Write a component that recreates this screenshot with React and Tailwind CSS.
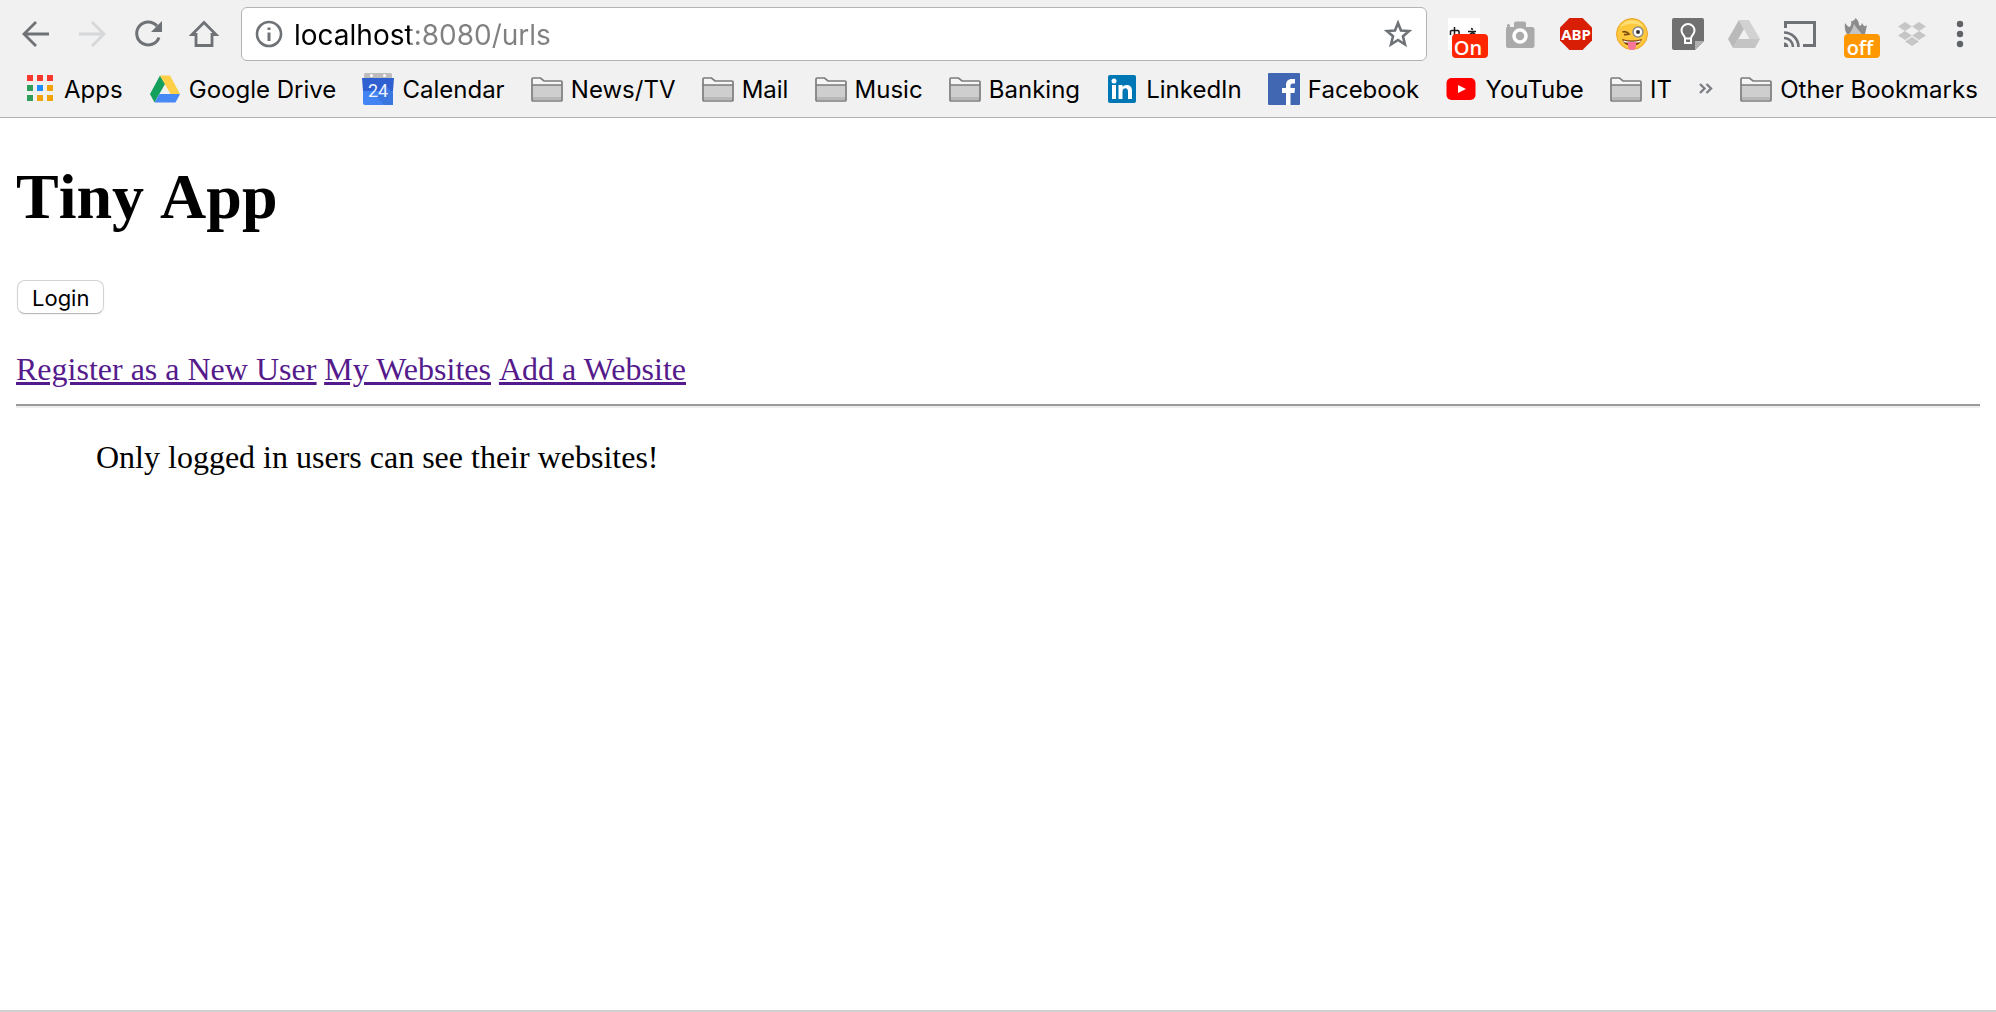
import React from "react";

const Icon = ({ children, className = "size-8 shrink-0", box = "0 0 32 32" }) => (
  <svg viewBox={box} className={className} fill="none" aria-hidden="true">
    {children}
  </svg>
);

const Folder = () => (
  <Icon>
    <path d="M1 26V6.500Q1 5 2.500 5H9.500Q11 5 12 6.500L13.500 8H29.500Q31 8 31 9.500V26Q31 27.500 29.500 27.500H2.500Q1 27.500 1 26Z" fill="#f6f6f6" />
    <rect x="1.500" y="12" width="29" height="15" fill="#cecece" />
    <rect x="1.500" y="24" width="29" height="3" fill="#b8b8b8" />
    <path d="M1 26V6Q1 5 2 5H9.500L13 8H30Q31 8 31 9V27Q31 28 30 28H2Q1 28 1 27ZM1 12H31" stroke="#7c7c7c" strokeWidth="1.700" />
  </Icon>
);

const Apps = () => (
  <Icon>
    {[
      ["#f9392f", "#f9392f", "#f9392f"],
      ["#2f9e58", "#1f8efa", "#f2a30a"],
      ["#2f9e58", "#f2a30a", "#f2a30a"],
    ].map((row, y) =>
      row.map((c, x) => <rect key={`${x}${y}`} x={3 + x * 10} y={2 + y * 10} width="6" height="6" fill={c} />)
    )}
  </Icon>
);

const Drive = () => (
  <Icon>
    <path d="M11 2.500L1 21L5.500 29.500L16 11Z" fill="#12a05c" />
    <path d="M11 2.500H21L31 21H21.500Z" fill="#ffcf48" />
    <path d="M10.500 21H31L26.500 29.500H5.500Z" fill="#4688f4" />
  </Icon>
);

const Calendar = () => (
  <Icon>
    <path d="M3 0H29Q30 0 30 2V6H2V2Q2 0 3 0Z" fill="#bdbdbd" />
    <circle cx="9.500" cy="2.500" r="1.500" fill="#fff" />
    <circle cx="22.500" cy="2.500" r="1.500" fill="#fff" />
    <path d="M0 5H32L31 18H1Z" fill="#2f5fd0" />
    <path d="M1 18H31V30Q31 32 29 32H3Q1 32 1 30Z" fill="#4284f3" />
    <path d="M15 24L24 13L31 20V32H22Z" fill="#3a76e0" />
    <text x="16" y="24" textAnchor="middle" fontFamily="Roboto, sans-serif" fontSize="18" fill="#eef3fd">24</text>
  </Icon>
);

const LinkedIn = () => (
  <Icon>
    <rect x="2" y="2" width="28" height="28" rx="2" fill="#0077b5" />
    <circle cx="8" cy="8" r="2.500" fill="#fff" />
    <path d="M6 12H10V26H6ZM12.500 12H16.500V14C18 11 26 10.500 26 17.500V26H22V18.500C22 14 16.500 14.500 16.500 18.500V26H12.500Z" fill="#fff" />
  </Icon>
);

const Facebook = () => (
  <Icon>
    <rect width="32" height="32" rx="1" fill="#4267b2" />
    <path d="M18 32V20H14V15H18V12C18 8 20.500 6 24 6H27V10.500H25C23 10.500 22.500 11.500 22.500 13V15H27L26.500 20H22.500V32Z" fill="#fff" />
  </Icon>
);

const YouTube = () => (
  <Icon>
    <rect x="1.500" y="5" width="29" height="22" rx="5" fill="#f00" />
    <path d="M13 12L21 16L13 20Z" fill="#fff" />
  </Icon>
);

const bookmarks = [
  ["Apps", Apps],
  ["Google Drive", Drive],
  ["Calendar", Calendar],
  ["News/TV", Folder],
  ["Mail", Folder],
  ["Music", Folder],
  ["Banking", Folder],
  ["LinkedIn", LinkedIn],
  ["Facebook", Facebook],
  ["YouTube", YouTube],
  ["IT", Folder],
];

const Bookmark = ({ label, Glyph }) => (
  <a href="#" className="flex shrink-0 items-center gap-2 whitespace-nowrap">
    <Glyph />
    <span className="pt-0.5">{label}</span>
  </a>
);

const navigation = [
  ["Back", <path d="M29 16H5M16 4L4 16L16 28" stroke="#6e7277" strokeWidth="2.800" />],
  ["Forward", <path d="M3 16H27M16 4L28 16L16 28" stroke="#d6d7d9" strokeWidth="2.800" />],
  [
    "Reload",
    <>
      <path d="M25 8A11.500 11.500 0 1 0 27 19.500" stroke="#6e7277" strokeWidth="3" />
      <path d="M30 3V14H19Z" fill="#6e7277" />
    </>,
  ],
  ["Home", <path d="M4 16.500H8V27.500H24V16.500H28L16 4.500Z" stroke="#6e7277" strokeWidth="2.800" />],
];

const extensions = [
  [
    "Language helper",
    <>
      <rect width="32" height="32" fill="#fff" />
      <path d="M2.500 17V13Q4 12 10 12.500Q11.500 13 11 16M6.500 9V17M20 13.500H28M23 10.500L25 11.500M22 16Q25 14 27 16" stroke="#1a1a1a" strokeWidth="1.500" />
    </>,
    { text: "On", className: "bg-[#ff2600]" },
  ],
  [
    "Camera",
    <>
      <path d="M3 9V7Q4 5 6 7V9H10V5Q10 3.500 12 3.500H20Q22 3.500 22 5V9H28Q30.500 9 30.500 11V28Q30.500 30 28 30H4Q2 30 2 28V11Q2 9 3 9Z" fill="#aaa" />
      <circle cx="16" cy="18" r="6" stroke="#fff" strokeWidth="3.500" />
    </>,
  ],
  [
    "Adblock Plus",
    <>
      <path d="M9.500 0H22.500L32 9.500V22.500L22.500 32H9.500L0 22.500V9.500Z" fill="#d81e05" />
      <text x="16" y="21.500" textAnchor="middle" fontFamily="Noto Sans, sans-serif" fontWeight="700" fontSize="15" fill="#fff">ABP</text>
    </>,
  ],
  [
    "Emoji",
    <>
      <circle cx="16" cy="16" r="15.500" fill="#fdc83c" stroke="#eda52c" />
      <path d="M4 9A14 14 0 0 1 28 9Q16 2 4 9Z" fill="#ffe078" />
      <path d="M6.500 14Q10 12.500 13 16Q10 17 8 16.500" stroke="#7a4a12" strokeWidth="1.800" />
      <circle cx="22" cy="14" r="5" fill="#fff" stroke="#8c8c8c" strokeWidth="1.500" />
      <circle cx="22" cy="14" r="2" fill="#333" />
      <path d="M6 21Q16 24 26 21Q24 28 16 28Q8 28 6 21Z" fill="#7a3f10" />
      <path d="M7.500 22.500Q16 25 24.500 22.500V24Q16 26 7.500 24Z" fill="#fff" />
      <path d="M12 24H20V28Q20 32 16 32Q12 32 12 28Z" fill="#f8769a" />
    </>,
  ],
  [
    "Keep",
    <>
      <path d="M2 0H30Q32 0 32 2V23L23 32H2Q0 32 0 30V2Q0 0 2 0Z" fill="#707070" />
      <path d="M32 23H23V32Z" fill="#b0b0b0" />
      <path d="M13 20.500C13 17.500 9.500 16.500 9.500 12.500A6.500 6.500 0 0 1 22.500 12.500C22.500 16.500 19 17.500 19 20.500V25H13V20.500H19" stroke="#fff" strokeWidth="2" />
    </>,
  ],
  [
    "Drive",
    <>
      <path d="M11 2L0 21L5 30L16 11Z" fill="#bababa" />
      <path d="M11 2H21L32 21H21.500Z" fill="#d2d2d2" />
      <path d="M10 21H32L27 30H5Z" fill="#c4c4c4" />
    </>,
  ],
  [
    "Cast",
    <>
      <path d="M1.500 10V4.500H30.500V27.500H19" stroke="#6e7277" strokeWidth="3" />
      <path d="M0 14.500A14.500 14.500 0 0 1 14.500 29M0 20A9 9 0 0 1 9 29" stroke="#6e7277" strokeWidth="2.600" />
      <path d="M0 24.500A4.500 4.500 0 0 1 4.500 29H0Z" fill="#6e7277" />
    </>,
  ],
  [
    "Flame",
    <>
      <path d="M5 5Q8 9 9.500 9Q12 7 11 3Q14 4 15.500 0Q19 3 19 7Q21 9 22 5Q24 10 27 7Q26 12 25 16H7Q4 12 5 5Z" fill="#8c8c8c" />
      <path d="M9 16Q12 13 14 6Q17 11 22 16Z" fill="#c4c4c4" />
    </>,
    { text: "off", className: "bg-[#ff9800]" },
  ],
  [
    "Dropbox",
    <path d="M9 4L16 8.500L9 13L2 8.500ZM23 4L30 8.500L23 13L16 8.500ZM9 13L16 17.500L9 22L2 17.500ZM23 13L30 17.500L23 22L16 17.500ZM9 23.500L16 19L23 23.500L16 28Z" fill="#c6c6c6" />,
  ],
];

const ToolButton = ({ label, children, badge }) => (
  <button type="button" aria-label={label} className="relative shrink-0">
    <Icon>{children}</Icon>
    {badge && (
      <span className={`absolute top-4 left-1 h-6 w-9 rounded pt-0.5 pr-1 text-center font-['Open_Sans',sans-serif] text-xl/6 font-semibold text-white ${badge.className}`}>
        {badge.text}
      </span>
    )}
  </button>
);

const Browser = () => (
  <header className="border-b border-[#b0b0b0] bg-[#f1f1f1] font-[Inter,sans-serif] text-black">
    <div className="flex items-center gap-[21px] pt-[7px] pr-7 pl-5">
      <nav aria-label="Navigation" className="flex gap-6">
        {navigation.map(([label, art]) => (
          <ToolButton key={label} label={label}>{art}</ToolButton>
        ))}
      </nav>
      <div className="flex h-[54px] min-w-0 flex-1 items-center gap-3 rounded-md border border-[#b4b4b4] bg-white px-3">
        <Icon>
          <circle cx="15" cy="16" r="12" stroke="#6e7277" strokeWidth="2.600" />
          <path d="M15 9.500V12M15 14.500V23" stroke="#6e7277" strokeWidth="3" />
        </Icon>
        <input
          type="text"
          aria-label="Address"
          defaultValue="localhost:8080/urls"
          className="-ml-1 min-w-0 flex-1 bg-linear-to-r from-black from-[116px] to-[#808080] to-[116px] bg-clip-text pt-0.5 text-[28px] leading-9 text-transparent caret-black outline-none"
        />
        <ToolButton label="Bookmark this page">
          <path d="M16 5L19 12.500L27 13L21 18.200L23 26.500L16 22L9 26.500L11 18.200L5 13L13 12.500Z" stroke="#6e7277" strokeWidth="2.600" />
        </ToolButton>
      </div>
      <div className="flex gap-6">
        {extensions.map(([label, art, badge]) => (
          <ToolButton key={label} label={label} badge={badge}>{art}</ToolButton>
        ))}
        <button type="button" aria-label="Menu">
          <Icon className="h-8 w-4" box="0 0 16 32">
            <circle cx="8" cy="6" r="3.200" fill="#5f6368" />
            <circle cx="8" cy="16" r="3.200" fill="#5f6368" />
            <circle cx="8" cy="26" r="3.200" fill="#5f6368" />
          </Icon>
        </button>
      </div>
    </div>
    <nav aria-label="Bookmarks" className="flex h-14 items-center justify-between pr-[18px] pl-6 text-2xl">
      {bookmarks.map(([label, Glyph]) => (
        <Bookmark key={label} label={label} Glyph={Glyph} />
      ))}
      <button type="button" aria-label="More bookmarks">
        <Icon className="h-8 w-4" box="0 0 16 32">
          <path d="M2 11L6.500 15.500L2 20M8.500 11L13 15.500L8.500 20" stroke="#7c7f84" strokeWidth="2.400" />
        </Icon>
      </button>
      <Bookmark label="Other Bookmarks" Glyph={Folder} />
    </nav>
  </header>
);

export default function App() {
  return (
    <div className="flex min-h-screen flex-col border-b-2 border-[#d0d0d0] bg-white">
      <Browser />
      <main className="px-4 font-['Liberation_Serif',serif] text-[32px] leading-[37px] text-black">
        <h1 className="mt-[42px] text-[64px] leading-[74px] font-bold [font-kerning:none]">Tiny App</h1>
        <form className="mt-[46px] flex pl-px" onSubmit={(e) => e.preventDefault()}>
          <button
            type="submit"
            className="h-[34px] rounded-lg border border-[#d2d2d2] border-b-[#b8b8b8] bg-white px-3.5 pt-0.5 font-[Inter,sans-serif] text-[22px] leading-[30px] shadow-xs"
          >
            Login
          </button>
        </form>
        <nav aria-label="Site" className="mt-[37px] flex flex-wrap gap-x-2 text-[#551a8b] underline">
          <a href="#">Register as a New User</a>
          <a href="#">My Websites</a>
          <a href="#">Add a Website</a>
        </nav>
        <hr className="mt-4 border-t-2 border-b-2 border-t-[#9a9a9a] border-b-[#eeeeee]" />
        <p className="mt-[31px] px-20">Only logged in users can see their websites!</p>
      </main>
    </div>
  );
}
